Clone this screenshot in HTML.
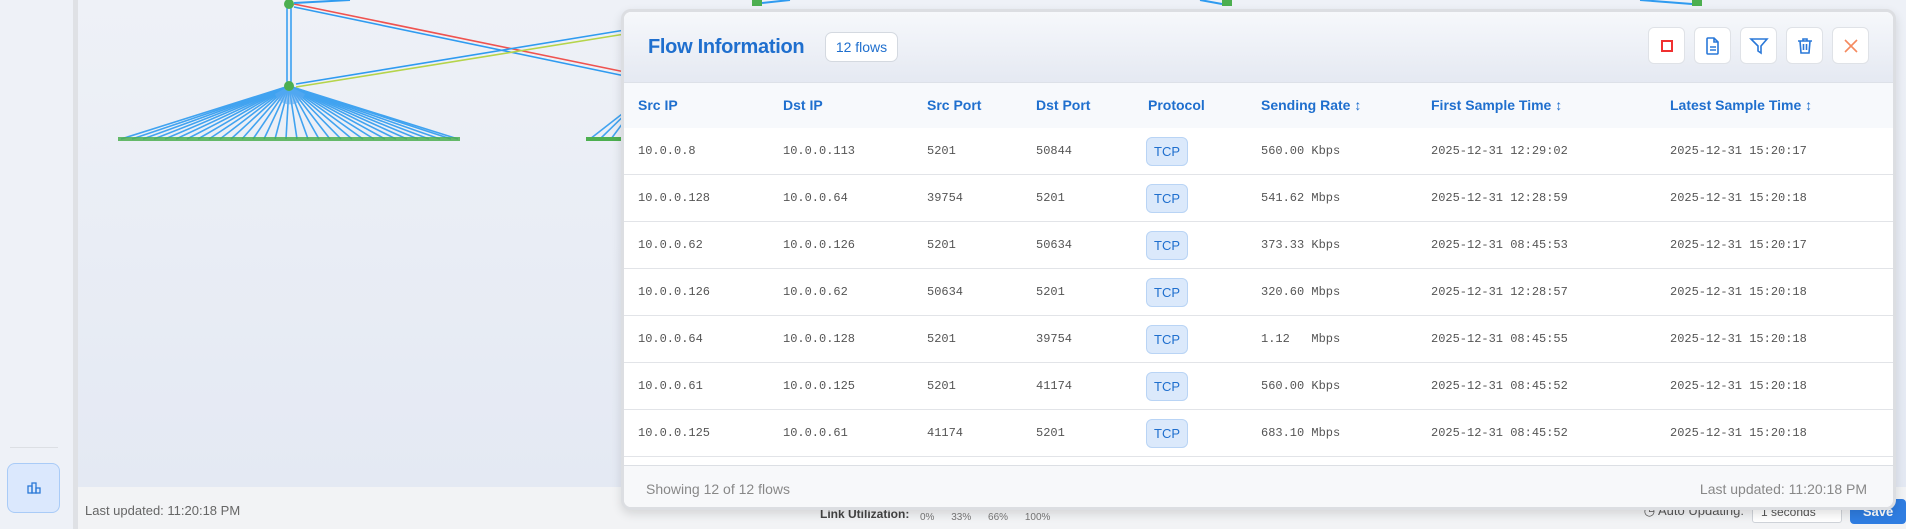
<!DOCTYPE html>
<html><head><meta charset="utf-8"><style>
*{box-sizing:border-box;margin:0;padding:0}
body{width:1906px;height:529px;overflow:hidden;position:relative;font-family:"Liberation Sans",sans-serif;background:#e6eaf3}
.side{position:absolute;left:0;top:0;width:73px;height:529px;background:#eef1f7}
.sdiv{position:absolute;left:73px;top:0;width:5px;height:529px;background:#dfe1e5}
.main{position:absolute;left:78px;top:0;width:1828px;height:487px;background:linear-gradient(#eef1f7,#e4e9f3)}
.bbar{position:absolute;left:78px;top:487px;width:1828px;height:42px;background:#f2f3f5}
.panel{position:absolute;left:621px;top:9px;width:1275px;height:501px;border:3px solid #dcdee2;border-radius:10px;background:#fff;overflow:hidden;box-shadow:0 4px 10px rgba(0,0,0,.12)}
.hdr{position:absolute;left:0;top:0;right:0;height:71px;background:linear-gradient(#f6f8fb,#e5e9f2);border-bottom:1px solid #dde1e8}
.title{position:absolute;left:24px;top:24px;font-size:20px;font-weight:bold;color:#1f6fce;letter-spacing:-.3px}
.badge{position:absolute;left:201px;top:20px;width:73px;height:30px;border:1px solid #d4d9e0;border-radius:7px;background:#fff;color:#1f6fce;font-size:14px;text-align:center;line-height:28px}
.btn{position:absolute;top:15px;width:37px;height:37px;border:1px solid #dfe2e7;border-radius:6px;background:#fff}
.btn svg{position:absolute;left:8px;top:8px}
.th{position:absolute;top:71px;left:0;right:0;height:45px;background:#f7f9fc}
.th span{position:absolute;top:14px;font-size:14px;font-weight:bold;color:#1f6fce}
.row{position:absolute;left:0;right:0;height:47px;border-bottom:1px solid #e2e4e8;background:#fff}
.row span{position:absolute;top:16px;font-family:"Liberation Mono",monospace;font-size:12px;color:#555}
.row .tcp{font-family:"Liberation Sans",sans-serif;top:9px;width:42px;height:29px;line-height:27px;text-align:center;background:#dbe9fb;border:1px solid #b9d4f5;border-radius:6px;color:#1f6fce;font-size:13px}
.foot{position:absolute;left:0;right:0;top:453px;height:48px;background:#f7f8fa;border-top:1px solid #dcdfe4;font-size:14px;color:#888}
</style></head><body>
<div class="side">
<div style="position:absolute;left:10px;top:447px;width:48px;height:1px;background:#dcdfe4"></div>
<div style="position:absolute;left:7px;top:463px;width:53px;height:50px;background:#dbe8fd;border:1px solid #a9cbf7;border-radius:8px">
<svg width="14" height="12" style="position:absolute;left:19px;top:18px" viewBox="0 0 14 12" fill="none" stroke="#2a78d8" stroke-width="1.3"><rect x="1" y="4" width="4" height="7"/><rect x="5" y="1" width="4" height="10"/><rect x="9" y="6" width="4" height="5"/></svg></div>
</div>
<div class="sdiv"></div>
<div class="main"></div>
<svg style="position:absolute;left:0;top:0" width="1906" height="160">
<g stroke="#2f9bf0" stroke-width="1.6" opacity=".9">
<line x1="289" y1="86" x2="121" y2="139"/><line x1="289" y1="86" x2="132" y2="139"/><line x1="289" y1="86" x2="143" y2="139"/><line x1="289" y1="86" x2="154" y2="139"/><line x1="289" y1="86" x2="165" y2="139"/><line x1="289" y1="86" x2="176" y2="139"/><line x1="289" y1="86" x2="187" y2="139"/><line x1="289" y1="86" x2="198" y2="139"/><line x1="289" y1="86" x2="209" y2="139"/><line x1="289" y1="86" x2="220" y2="139"/><line x1="289" y1="86" x2="231" y2="139"/><line x1="289" y1="86" x2="242" y2="139"/><line x1="289" y1="86" x2="253" y2="139"/><line x1="289" y1="86" x2="264" y2="139"/><line x1="289" y1="86" x2="275" y2="139"/><line x1="289" y1="86" x2="286" y2="139"/><line x1="289" y1="86" x2="297" y2="139"/><line x1="289" y1="86" x2="308" y2="139"/><line x1="289" y1="86" x2="319" y2="139"/><line x1="289" y1="86" x2="330" y2="139"/><line x1="289" y1="86" x2="341" y2="139"/><line x1="289" y1="86" x2="352" y2="139"/><line x1="289" y1="86" x2="363" y2="139"/><line x1="289" y1="86" x2="374" y2="139"/><line x1="289" y1="86" x2="385" y2="139"/><line x1="289" y1="86" x2="396" y2="139"/><line x1="289" y1="86" x2="407" y2="139"/><line x1="289" y1="86" x2="418" y2="139"/><line x1="289" y1="86" x2="429" y2="139"/><line x1="289" y1="86" x2="440" y2="139"/><line x1="289" y1="86" x2="451" y2="139"/><line x1="289" y1="86" x2="458" y2="139"/>
<line x1="640" y1="100" x2="590" y2="139"/><line x1="640" y1="100" x2="600" y2="139"/><line x1="640" y1="100" x2="611" y2="139"/>
</g>
<path d="M275 94 A16 16 0 0 0 305 94 L289 86z" fill="#5aaaf2" opacity=".6"/>
<g fill="#4caf50"><rect x="118" y="137" width="342" height="4" opacity=".85"/><rect x="586" y="137" width="36" height="4"/></g>
<line x1="287" y1="8" x2="287" y2="82" stroke="#2f9bf0" stroke-width="1.5"/><line x1="291" y1="8" x2="291" y2="82" stroke="#2f9bf0" stroke-width="1.5"/>
<line x1="294" y1="4" x2="625" y2="72" stroke="#ef5350" stroke-width="1.6"/><line x1="294" y1="7" x2="625" y2="76" stroke="#2f9bf0" stroke-width="1.6"/>
<line x1="296" y1="84" x2="625" y2="30" stroke="#2f9bf0" stroke-width="1.6"/><line x1="296" y1="87" x2="625" y2="34" stroke="#b5d44a" stroke-width="1.6"/>
<line x1="294" y1="3" x2="350" y2="0" stroke="#2f9bf0" stroke-width="2"/>
<circle cx="289" cy="4" r="5" fill="#4caf50"/><circle cx="289" cy="86" r="5" fill="#4caf50"/>
<rect x="752" y="0" width="10" height="6" fill="#4caf50"/><rect x="1222" y="0" width="10" height="6" fill="#4caf50"/><rect x="1692" y="0" width="10" height="6" fill="#4caf50"/>
<line x1="1200" y1="0" x2="1222" y2="4" stroke="#2f9bf0" stroke-width="2"/><line x1="1640" y1="0" x2="1692" y2="4" stroke="#2f9bf0" stroke-width="2"/><line x1="762" y1="3" x2="790" y2="0" stroke="#2f9bf0" stroke-width="2"/>
</svg>
<div class="bbar">
<div style="position:absolute;left:7px;top:16px;font-size:13px;color:#666">Last updated: 11:20:18 PM</div>
<div style="position:absolute;left:742px;top:20px;font-size:12px;font-weight:bold;color:#444">Link Utilization:</div>
<div style="position:absolute;left:842px;top:25px;font-size:10px;color:#777;word-spacing:14px">0% 33% 66% 100%</div>
<div style="position:absolute;right:162px;top:16px;font-size:13px;color:#555;white-space:nowrap">◷ Auto Updating:</div>
<div style="position:absolute;left:1674px;top:15px;width:90px;height:21px;border:1px solid #cfd3d9;border-radius:3px;background:#fff;font-size:12px;color:#555;padding:2px 8px">1 seconds</div>
<div style="position:absolute;left:1772px;top:12px;width:56px;height:25px;border-radius:4px;background:#2f7de1;color:#fff;font-size:13px;font-weight:bold;text-align:center;line-height:25px">Save</div>
</div>
<div class="panel">
<div class="hdr">
<div class="title">Flow Information</div>
<div class="badge">12 flows</div>
<div class="btn" style="left:1024px"><svg width="20" height="20"><rect x="5" y="5" width="10" height="10" fill="none" stroke="#f03030" stroke-width="2"/></svg></div>
<div class="btn" style="left:1070px"><svg width="20" height="20" fill="none" stroke="#2a78d8" stroke-width="1.6"><path d="M5 2h6l4 4v11a1 1 0 0 1-1 1H5a1 1 0 0 1-1-1V3a1 1 0 0 1 1-1z M11 2v4h4"/><path d="M7 11h6M7 14h6"/></svg></div>
<div class="btn" style="left:1116px"><svg width="20" height="20" fill="none" stroke="#2a78d8" stroke-width="1.6"><path d="M2 3h16l-6 7v7l-3-2v-5z"/></svg></div>
<div class="btn" style="left:1162px"><svg width="20" height="20" fill="none" stroke="#2a78d8" stroke-width="1.6"><path d="M3 5h14M8 5V3h4v2M5 5l1 12h8l1-12M8.5 8v6M11.5 8v6"/></svg></div>
<div class="btn" style="left:1208px"><svg width="20" height="20" fill="none" stroke="#f58a5f" stroke-width="1.6"><path d="M4 4l12 12M16 4L4 16"/></svg></div>
</div>
<div class="th"><span style="left:14px">Src IP</span><span style="left:159px">Dst IP</span><span style="left:303px">Src Port</span><span style="left:412px">Dst Port</span><span style="left:524px">Protocol</span><span style="left:637px">Sending Rate ↕</span><span style="left:807px">First Sample Time ↕</span><span style="left:1046px">Latest Sample Time ↕</span></div>
<div class="row" style="top:116px"><span style="left:14px">10.0.0.8</span><span style="left:159px">10.0.0.113</span><span style="left:303px">5201</span><span style="left:412px">50844</span><span class="tcp" style="left:522px">TCP</span><span style="left:637px">560.00 Kbps</span><span style="left:807px">2025-12-31 12:29:02</span><span style="left:1046px">2025-12-31 15:20:17</span></div>
<div class="row" style="top:163px"><span style="left:14px">10.0.0.128</span><span style="left:159px">10.0.0.64</span><span style="left:303px">39754</span><span style="left:412px">5201</span><span class="tcp" style="left:522px">TCP</span><span style="left:637px">541.62 Mbps</span><span style="left:807px">2025-12-31 12:28:59</span><span style="left:1046px">2025-12-31 15:20:18</span></div>
<div class="row" style="top:210px"><span style="left:14px">10.0.0.62</span><span style="left:159px">10.0.0.126</span><span style="left:303px">5201</span><span style="left:412px">50634</span><span class="tcp" style="left:522px">TCP</span><span style="left:637px">373.33 Kbps</span><span style="left:807px">2025-12-31 08:45:53</span><span style="left:1046px">2025-12-31 15:20:17</span></div>
<div class="row" style="top:257px"><span style="left:14px">10.0.0.126</span><span style="left:159px">10.0.0.62</span><span style="left:303px">50634</span><span style="left:412px">5201</span><span class="tcp" style="left:522px">TCP</span><span style="left:637px">320.60 Mbps</span><span style="left:807px">2025-12-31 12:28:57</span><span style="left:1046px">2025-12-31 15:20:18</span></div>
<div class="row" style="top:304px"><span style="left:14px">10.0.0.64</span><span style="left:159px">10.0.0.128</span><span style="left:303px">5201</span><span style="left:412px">39754</span><span class="tcp" style="left:522px">TCP</span><span style="left:637px;white-space:pre">1.12   Mbps</span><span style="left:807px">2025-12-31 08:45:55</span><span style="left:1046px">2025-12-31 15:20:18</span></div>
<div class="row" style="top:351px"><span style="left:14px">10.0.0.61</span><span style="left:159px">10.0.0.125</span><span style="left:303px">5201</span><span style="left:412px">41174</span><span class="tcp" style="left:522px">TCP</span><span style="left:637px">560.00 Kbps</span><span style="left:807px">2025-12-31 08:45:52</span><span style="left:1046px">2025-12-31 15:20:18</span></div>
<div class="row" style="top:398px"><span style="left:14px">10.0.0.125</span><span style="left:159px">10.0.0.61</span><span style="left:303px">41174</span><span style="left:412px">5201</span><span class="tcp" style="left:522px">TCP</span><span style="left:637px">683.10 Mbps</span><span style="left:807px">2025-12-31 08:45:52</span><span style="left:1046px">2025-12-31 15:20:18</span></div>
<div class="foot"><div style="position:absolute;left:22px;top:15px">Showing 12 of 12 flows</div><div style="position:absolute;right:26px;top:15px">Last updated: 11:20:18 PM</div></div>
</div>
</body></html>
